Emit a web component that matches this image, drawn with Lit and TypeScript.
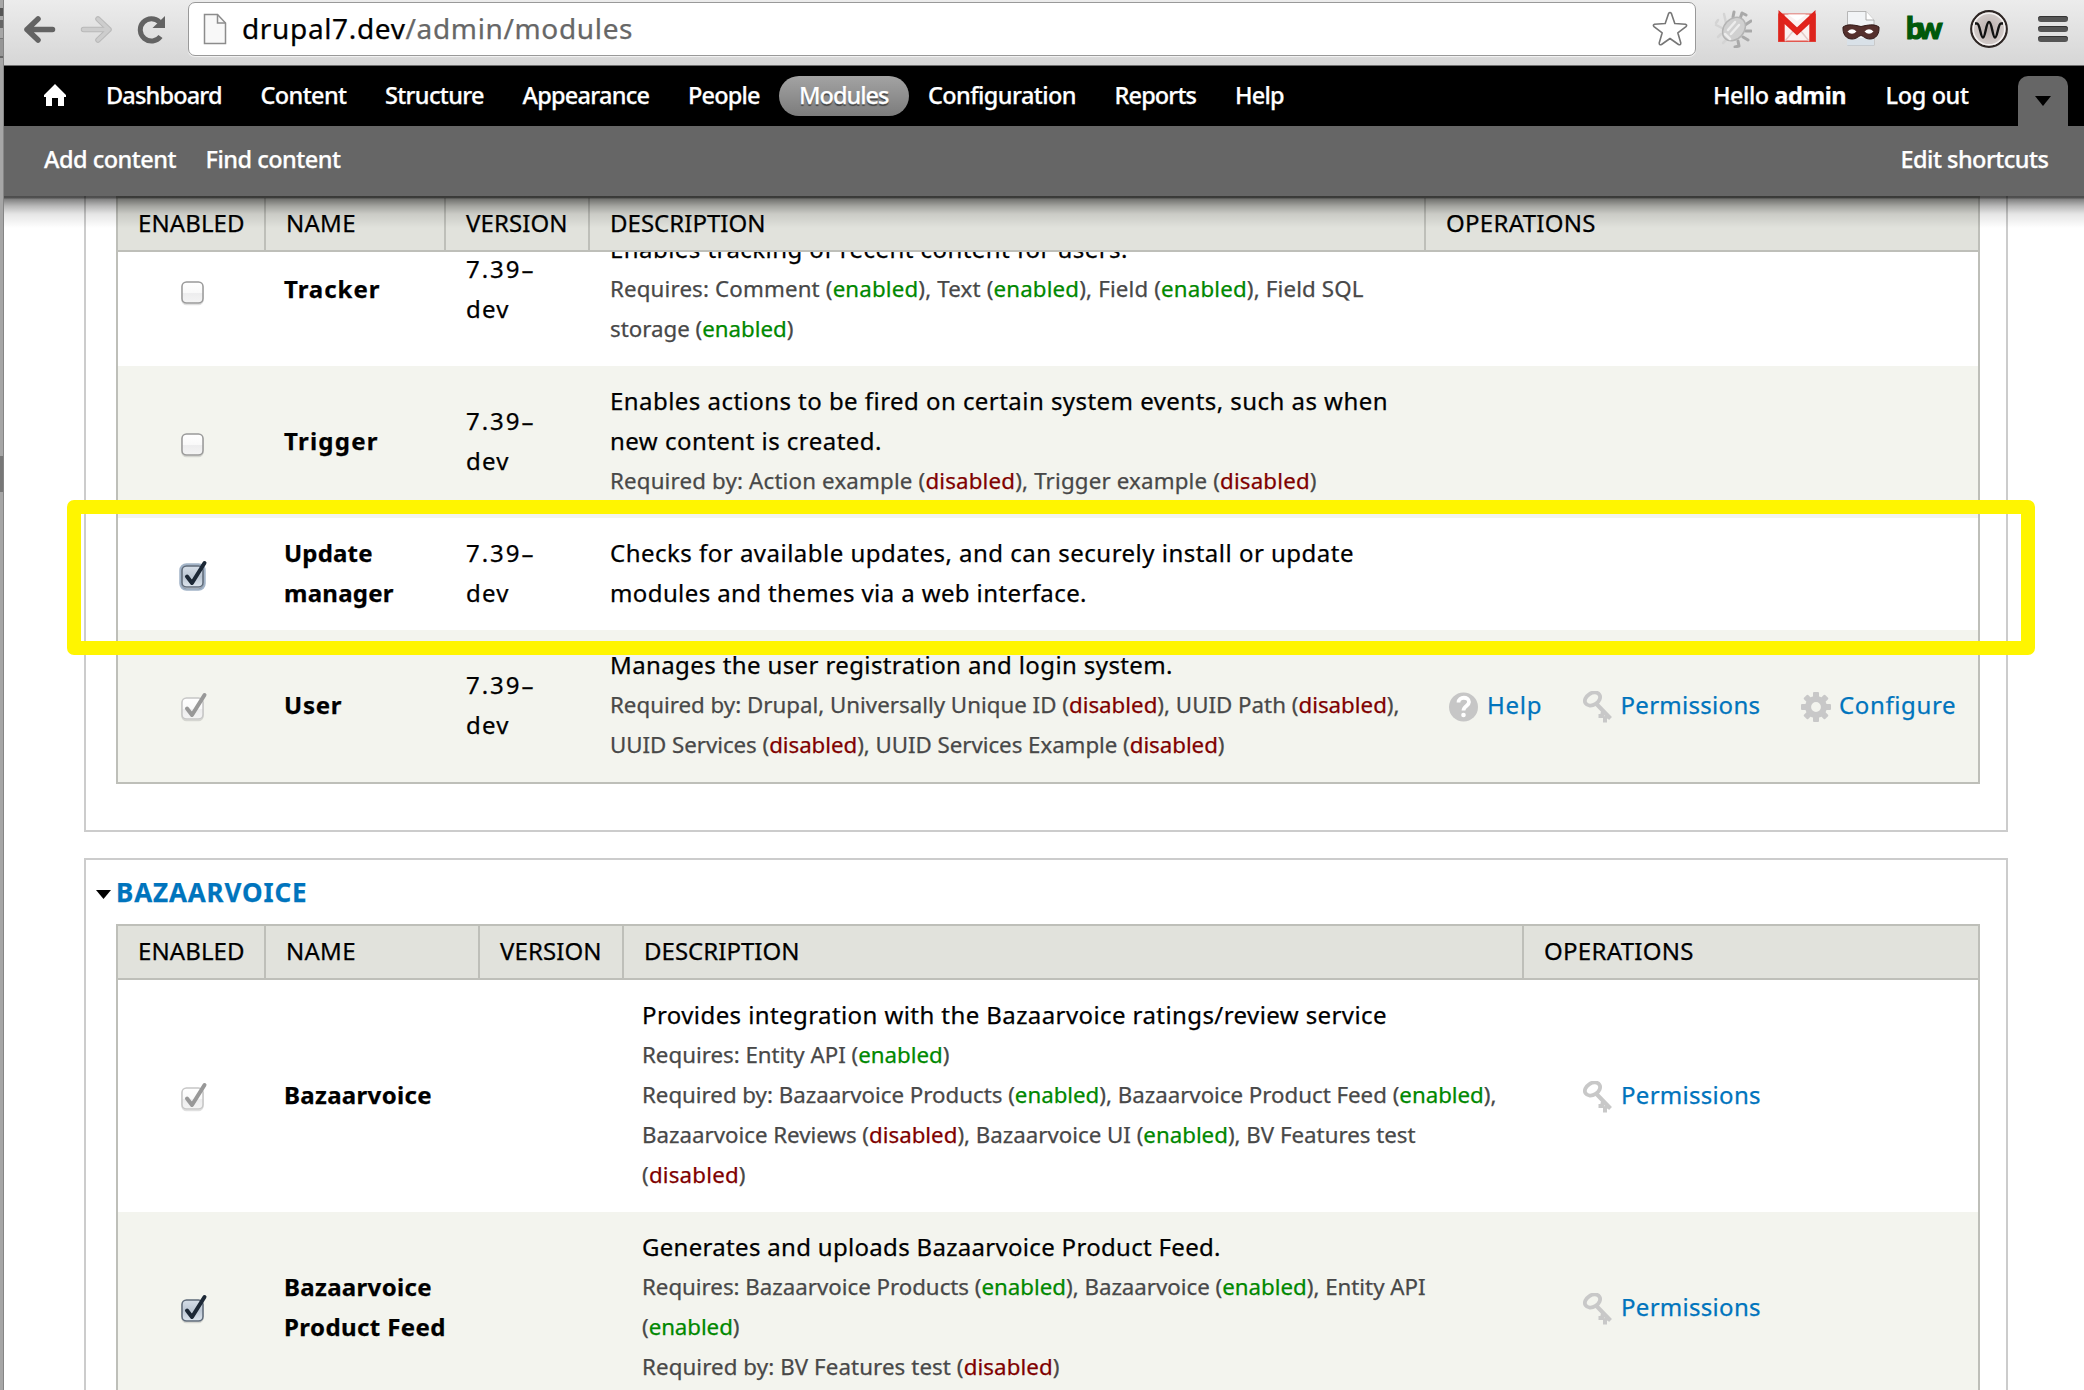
import { LitElement, html, css, svg, nothing, TemplateResult } from "lit";
import { customElement, property } from "lit/decorators.js";

/* A single line of text whose tracking is adjusted so that it fills a set width. */
@customElement("text-run")
class TextRun extends LitElement {
  @property({ type: Number }) w = 0;
  static styles = css`
    :host { display: inline-block; white-space: nowrap; }
    .t { display: inline-block; }
  `;
  render() {
    return html`<span class="t"><slot></slot></span>`;
  }
  updated() {
    if (!this.w) return;
    this.style.letterSpacing = "0px";
    const n = (this.textContent || "").trim().length;
    const natural = this.renderRoot.querySelector(".t")!.getBoundingClientRect().width;
    const pad = 2.5;
    const spacing = (this.w + pad - natural) / Math.max(1, n - 1);
    this.style.letterSpacing = spacing.toFixed(3) + "px";
    this.style.marginRight = (-spacing).toFixed(3) + "px";
  }
}

type Check = "off" | "on" | "focus" | "locked";
type Line = { t: string; w: number; small?: boolean };
type Row = { check: Check; name: [string, number][]; version?: boolean; lines: Line[]; ops: string[] };

const coreRows: Row[] = [
  {
    check: "off", name: [["Tracker", 93]], version: true, ops: [],
    lines: [
      { t: "Enables tracking of recent content for users.", w: 515 },
      { t: "Requires: Comment (enabled), Text (enabled), Field (enabled), Field SQL", w: 751, small: true },
      { t: "storage (enabled)", w: 181, small: true },
    ],
  },
  {
    check: "off", name: [["Trigger", 91]], version: true, ops: [],
    lines: [
      { t: "Enables actions to be fired on certain system events, such as when", w: 775 },
      { t: "new content is created.", w: 269 },
      { t: "Required by: Action example (disabled), Trigger example (disabled)", w: 704, small: true },
    ],
  },
  {
    check: "focus", name: [["Update", 86], ["manager", 107]], version: true, ops: [],
    lines: [
      { t: "Checks for available updates, and can securely install or update", w: 741 },
      { t: "modules and themes via a web interface.", w: 474 },
    ],
  },
  {
    check: "locked", name: [["User", 55]], version: true, ops: ["Help", "Permissions", "Configure"],
    lines: [
      { t: "Manages the user registration and login system.", w: 560 },
      { t: "Required by: Drupal, Universally Unique ID (disabled), UUID Path (disabled),", w: 787, small: true },
      { t: "UUID Services (disabled), UUID Services Example (disabled)", w: 612, small: true },
    ],
  },
];

const bvRows: Row[] = [
  {
    check: "locked", name: [["Bazaarvoice", 145]], ops: ["Permissions"],
    lines: [
      { t: "Provides integration with the Bazaarvoice ratings/review service", w: 742 },
      { t: "Requires: Entity API (enabled)", w: 305, small: true },
      { t: "Required by: Bazaarvoice Products (enabled), Bazaarvoice Product Feed (enabled),", w: 852, small: true },
      { t: "Bazaarvoice Reviews (disabled), Bazaarvoice UI (enabled), BV Features test", w: 771, small: true },
      { t: "(disabled)", w: 101, small: true },
    ],
  },
  {
    check: "on", name: [["Bazaarvoice", 145], ["Product Feed", 159]], ops: ["Permissions"],
    lines: [
      { t: "Generates and uploads Bazaarvoice Product Feed.", w: 576 },
      { t: "Requires: Bazaarvoice Products (enabled), Bazaarvoice (enabled), Entity API", w: 781, small: true },
      { t: "(enabled)", w: 95, small: true },
      { t: "Required by: BV Features test (disabled)", w: 415, small: true },
    ],
  },
];

const headings: [string, number][] = [
  ["ENABLED", 104], ["NAME", 67], ["VERSION", 99], ["DESCRIPTION", 153], ["OPERATIONS", 147],
];

const opWidths: Record<string, number> = { Help: 52, Permissions: 137, Configure: 114 };

const gearTeeth = [0, 45, 90, 135, 180, 225, 270, 315];

const opIcons: Record<string, TemplateResult> = {
  Help: html`<svg class="opicon" viewBox="0 0 32 32">
    <circle cx="15.500" cy="16" r="14.500" fill="#c6c6c6"/>
    <path d="M10.500 11.500c0-6.500 10.500-6 10.500-.5 0 4-5.500 4-5.500 8.500" fill="none" stroke="#fff" stroke-width="3.800"/>
    <circle cx="15.500" cy="24" r="2.300" fill="#fff"/></svg>`,
  Permissions: html`<svg class="opicon" viewBox="0 0 32 32">
    <g fill="none" stroke="#c8c8c8" stroke-linejoin="round"><ellipse cx="10.500" cy="8" rx="8.200" ry="5.800" stroke-width="3.800" transform="rotate(-32 10.500 8)"/>
    <path d="M14.500 13L28.500 27.500M21 20.500l-1 4.500h-3.500M25 25l-2 2.500v4" stroke-width="4"/></g></svg>`,
  Configure: html`<svg class="opicon" viewBox="0 0 32 32">
    ${gearTeeth.map((a) => svg`<rect x="13" y="1" width="6" height="8" rx="1" fill="#c8c8c8" transform=${`rotate(${a} 16 16)`}/>`)}
    <circle cx="16" cy="16" r="7.900" fill="none" stroke="#c8c8c8" stroke-width="6"/></svg>`,
};

@customElement("module-table")
class ModuleTable extends LitElement {
  @property({ attribute: false }) rows: Row[] = [];
  @property({ type: Boolean, reflect: true }) scrolled = false;

  static styles = css`
    :host { display: block; width: 1860px; border: 2px solid #bebfb9; }
    .head, .row { display: grid; grid-template-columns: 148px 180px 144px 836px 1fr; }
    :host(:not([scrolled])) .head, :host(:not([scrolled])) .row { grid-template-columns: 148px 214px 144px 900px 1fr; }
    .head { height: 52px; background: #e1e2dc; border-bottom: 2px solid #bebfb9; position: relative; z-index: 1; }
    .th { border-right: 2px solid #bebfb9; padding: 5px 0 0 20px; line-height: 40px; }
    .th:last-child { border-right: 0; }
    .row { background: #fff; padding: 15px 0 17px; align-items: center; line-height: 40px; }
    .row:nth-child(even) { background: #f3f4ee; }
    .body { display: flex; flex-direction: column; }
    :host([scrolled]) .body { margin-top: -38px; }
    .check { padding-left: 62px; height: 24px; margin-top: 5px; }
    .check svg { display: block; overflow: visible; }
    .name { font-weight: bold; padding-left: 18px; display: flex; flex-direction: column; }
    .version { padding-left: 20px; display: flex; flex-direction: column; }
    .desc { padding-left: 18px; display: flex; flex-direction: column; }
    :host([scrolled]) .desc { padding-left: 20px; }
    .line { height: 40px; }
    .small { font-size: 22.300px; color: #484848; }
    .enabled { color: #080; }
    .disabled { color: #800000; }
    .ops { display: flex; }
    .op { display: flex; align-items: center; color: #0074bd; }
    .ops .op { padding-left: 22px; padding-right: 18px; }
    .ops.single .op { padding-left: 58px; }
    .opicon { width: 32px; height: 32px; margin: 3px 7px 0 0; flex: none; }
  `;

  colored(t: string) {
    return t.split(/(enabled|disabled)/).map((p) =>
      p === "enabled" || p === "disabled" ? html`<span class=${p}>${p}</span>` : p);
  }

  checkbox(c: Check) {
    const locked = c === "locked";
    const marked = c !== "off";
    const blue = c === "on" || c === "focus";
    return html`<svg width="24" height="24" viewBox="0 0 24 24">
      <defs>
        <linearGradient id="w" x1="0" y1="0" x2="0" y2="1"><stop offset="0" stop-color="#fff"/><stop offset=".5" stop-color="#f9f9f9"/><stop offset=".55" stop-color="#ededee"/><stop offset="1" stop-color="#f4f4f4"/></linearGradient>
        <linearGradient id="b" x1="0" y1="0" x2="0" y2="1"><stop offset="0" stop-color="#d6dee8"/><stop offset=".5" stop-color="#bcc7d4"/><stop offset="1" stop-color="#dde5ee"/></linearGradient>
      </defs>
      ${c === "focus" ? svg`<rect x="0.500" y="0.500" width="24" height="25" rx="6" fill="none" stroke="#a3b4c8" stroke-width="2.500"/>` : nothing}
      <rect x="2" y="3" width="21" height="21.500" rx="4.500" fill="none" stroke="#000" stroke-opacity=".12" stroke-width="1.500"/>
      <rect x="2" y="2" width="21" height="21" rx="4.500" fill=${blue ? "url(#b)" : "url(#w)"} stroke=${locked ? "#c6c6c6" : blue ? "#5d6978" : "#999"} stroke-width="1.500"/>
      ${marked ? svg`<path d="M7 12.500L12 19L24.500 -1" fill="none" stroke=${locked ? "#989898" : "#1c2836"} stroke-width="4" stroke-linecap="round" stroke-linejoin="round"/>` : nothing}
    </svg>`;
  }

  render() {
    return html`
      <div class="head">${headings.map(([t, w]) => html`<div class="th"><text-run w=${w}>${t}</text-run></div>`)}</div>
      <div class="body">
        ${this.rows.map((r) => html`<div class="row">
          <div class="check">${this.checkbox(r.check)}</div>
          <div class="name">${r.name.map(([t, w]) => html`<div class="line"><text-run w=${w}>${t}</text-run></div>`)}</div>
          <div class="version">${r.version ? html`<div class="line"><text-run w="65">7.39–</text-run></div><div class="line"><text-run w="40">dev</text-run></div>` : nothing}</div>
          <div class="desc">${r.lines.map((l) => html`<div class="line ${l.small ? "small" : ""}"><text-run w=${l.w}>${this.colored(l.t)}</text-run></div>`)}</div>
          <div class="ops ${r.ops.length === 1 ? "single" : ""}">${r.ops.map((o) => html`<div class="op">${opIcons[o]}<text-run w=${opWidths[o]}>${o}</text-run></div>`)}</div>
        </div>`)}
      </div>`;
  }
}

const nav: [string, number][] = [
  ["Dashboard", 114], ["Content", 84], ["Structure", 97], ["Appearance", 125], ["People", 70],
  ["Modules", 88], ["Configuration", 146], ["Reports", 80], ["Help", 47],
];

const bug = html`<svg width="38" height="38" viewBox="0 0 38 38">
  <g fill="none" stroke="#a9a9a9" stroke-width="3" stroke-linecap="round" stroke-linejoin="round">
    <path d="M19 7L20 2M26 9L28 3L32 5M31 15L37 11M32 21H37M29 27L34 30M24 31L25 36L21 37"/></g>
  <g fill="none" stroke="#d4d4d4" stroke-width="2.500" stroke-linecap="round"><path d="M12 13L10 4M8 18L2 15M7 24L4 27M12 30L9 33M4 10L2 13"/></g>
  <ellipse cx="20" cy="19" rx="10" ry="13" transform="rotate(42 20 19)" fill="#d0d0d0" stroke="#b4b4b4" stroke-width="1.500"/>
  <path d="M14 20L21 12M17 24L25 15M11 24L16 29" stroke="#ececec" stroke-width="2.500" stroke-linecap="round"/></svg>`;

const mail = html`<svg width="38" height="38" viewBox="0 0 38 38">
  <rect x="0" y="3.500" width="38" height="28.500" fill="#e2574f"/>
  <rect x="6.500" y="4.500" width="25" height="26" fill="#fbf1f0"/>
  <path d="M7 31L16 20M31 31L22 20" stroke="#e3c9c7" stroke-width="1.500"/>
  <path d="M10 4.500H28L19 11Z" fill="#fff"/>
  <path d="M3.500 31.500V7L19 21.500L34.500 7V31.500" fill="none" stroke="#dd241d" stroke-width="6"/>
  <path d="M2 6L19 22L36 6" fill="none" stroke="#e8221b" stroke-width="2"/></svg>`;

const mask = html`<svg width="38" height="38" viewBox="0 0 38 38">
  <path d="M5.500 1.500H24L32 10V35.500H5.500Z" fill="#f2f4f6" stroke="#b6b6b6" stroke-width="1"/>
  <path d="M5 28H32V35.500H5Z" fill="#d9e1e8"/>
  <path d="M24 1.500V10H32" fill="#fff" stroke="#aaa" stroke-width="1"/>
  <path d="M1 17C6 13.500 12 15 19 16.500C26 15 32 13.500 37 17C37.500 24 34 29 28 29C23 29 21.500 26 19 25.500C16.500 26 15 29 10 29C4 29 .5 24 1 17Z" fill="#55302d" stroke="#331a18" stroke-width="1"/>
  <path d="M5.500 21.500Q10 17 14.500 21.500Q10 26 5.500 21.500ZM22.500 21.500Q27 17 31.500 21.500Q27 26 22.500 21.500Z" fill="#fff"/></svg>`;

const wave = html`<svg width="38" height="38" viewBox="0 0 38 38">
  <defs><radialGradient id="m"><stop offset="0" stop-color="#b9adab"/><stop offset="1" stop-color="#d6cfcd"/></radialGradient></defs>
  <circle cx="19" cy="19" r="17.800" fill="url(#m)" stroke="#2e2624" stroke-width="2.200"/>
  <circle cx="19" cy="19" r="15.800" fill="none" stroke="#f5f2f1" stroke-width="1.500"/>
  <path d="M5 13.500H7C10 13.500 10.500 27.500 13 27.500C15.500 27.500 16 12 19 12C22 12 22.500 27.500 25 27.500C27.500 27.500 28 13.500 31 13.500H33" fill="none" stroke="#111" stroke-width="2.400"/></svg>`;

@customElement("app-root")
class AppRoot extends LitElement {
  static styles = css`
    :host { display: block; font-family: "Noto Sans", "Open Sans", sans-serif; font-size: 24px; color: #000; -webkit-text-stroke: .25px; }
    .screen { position: relative; width: 2084px; height: 1390px; overflow: hidden; background: #fff; display: flex; }
    .edge { width: 4px; flex: none; box-sizing: border-box; border-right: 1px solid #858585; background: linear-gradient(#a6a6a6 8px, #555 8px 16px, #a6a6a6 16px 20px, #666 20px 28px, #a6a6a6 28px 38px, #777 38px 39px, #959595 39px 56px, #666 56px 58px, #a6a6a6 58px 456px, #777 456px 492px, #a6a6a6 492px); }
    .window { flex: 1; display: flex; flex-direction: column; min-width: 0; }
    .chrome { height: 66px; flex: none; border-bottom: 1px solid #6e6e6e; background: linear-gradient(#ececec, #d6d6d6); display: flex; box-sizing: border-box; }
    .chrome svg { display: block; flex: none; }
    .buttons { width: 184px; padding: 14px 0 0 18px; box-sizing: border-box; display: flex; gap: 15px; }
    .omnibox { margin-top: 2px; width: 1508px; height: 54px; box-sizing: border-box; border: 1.500px solid #999; border-radius: 7px; background: #fff; box-shadow: 0 1px 1px #f4f4f4; display: flex; align-items: center; padding: 0 7px 0 14px; }
    .url { flex: 1; padding-left: 15px; font-size: 28px; line-height: 49px; height: 50px; color: #676767; }
    .url b { font-weight: normal; color: #000; }
    .exts { display: flex; padding-top: 10px; padding-left: 18px; gap: 26px; }
    .bw { width: 38px; height: 38px; color: #00590a; font: 900 31px/34px Lato, "Noto Sans", sans-serif; -webkit-text-stroke: 1.200px #00590a; display: flex; }
    .burger { width: 30px; margin: 6px 0 0 4px; display: flex; flex-direction: column; gap: 4px; }
    .bar { height: 6px; border-radius: 3px; background: #555; box-shadow: inset 0 1px 0 #333; }
    .menu { background: #000; height: 60px; flex: none; display: flex; color: #fff; font-size: 23.500px; font-weight: 500; line-height: 59px; position: relative; }
    .home { width: 22px; height: 22px; margin: 18px 21px 0 40px; }
    .items { display: flex; flex: 1; gap: 0; }
    .item { padding: 0 19px; height: 58px; }
    .item.active { margin: 10px 0 0; padding: 0 19.500px; height: 40px; line-height: 39px; border-radius: 20px; background: linear-gradient(#a3a3a3, #7c7c7c); text-shadow: 0 2px 1px #444; }
    .user { display: flex; gap: 39px; padding-right: 49px; }
    .user b { font-weight: bold; }
    .tab { width: 50px; height: 50px; margin: 10px 16px 0 0; border-radius: 10px 10px 0 0; background: #666; display: flex; justify-content: center; align-items: center; }
    .shortcuts { height: 70px; flex: none; background: #666; color: #fff; display: flex; gap: 29px; padding: 0 35px 0 40px; box-sizing: border-box; font-size: 23.500px; font-weight: 500; line-height: 66px; position: relative; z-index: 3; }
    .shortcuts::after { content: ""; position: absolute; left: 0; right: 0; top: 70px; height: 32px; background: linear-gradient(rgba(0,0,0,.7), rgba(0,0,0,.68) 2px, rgba(0,0,0,.5) 3px, rgba(0,0,0,.28) 10px, rgba(0,0,0,.1) 18px, rgba(0,0,0,0)); }
    .spacer { flex: 1; }
    .page { flex: 1; min-height: 0; padding: 0 76px 0 80px; display: flex; flex-direction: column; gap: 26px; }
    .group { border: 2px solid #ccc; padding: 0 26px 0 30px; flex: none; }
    .group.first { border-top: 0; padding-bottom: 46px; }
    .group.second { height: 600px; }
    .title { height: 64px; margin-left: -20px; display: flex; align-items: center; gap: 5px; font-weight: bold; font-size: 26px; color: #0074bd; line-height: 60px; }
    .title svg { margin-top: 4px; }
    .highlight { position: absolute; left: 67px; top: 500px; width: 1940px; height: 127px; border: 14px solid #fff500; border-radius: 7px; }
  `;

  render() {
    return html`<div class="screen">
      <div class="edge"></div>
      <div class="window">
        <div class="chrome">
          <div class="buttons">
            <svg width="40" height="30" viewBox="0 0 40 30"><path d="M16 5L5 15.500L16 26M5 15.500H30.500" fill="none" stroke="#636363" stroke-width="5.500" stroke-linecap="round" stroke-linejoin="round"/></svg>
            <svg width="40" height="30" viewBox="0 0 40 30"><path d="M21 5L32 15.500L21 26M32 15.500H6.500" fill="none" stroke="#b9b9b9" stroke-width="5.500" stroke-linecap="round" stroke-linejoin="round"/><path d="M21 5L32 15.500L21 26M32 15.500H6.500" fill="none" stroke="#cdcdcd" stroke-width="3.500" stroke-linecap="round" stroke-linejoin="round"/></svg>
            <svg width="36" height="30" viewBox="0 0 36 30"><path d="M28.500 22.500A11.200 11.200 0 1 1 27.500 8" fill="none" stroke="#636363" stroke-width="5"/><path d="M33 2V14H20.500Z" fill="#636363"/></svg>
          </div>
          <div class="omnibox">
            <svg width="24" height="32" viewBox="0 0 24 32"><path d="M1.500 1.500H14.500L22.500 10V30.500H1.500Z" fill="#f8f8f8" stroke="#8c8c8c" stroke-width="1.500"/><path d="M14.500 1.500V10H22.500" fill="none" stroke="#8c8c8c" stroke-width="1.500"/></svg>
            <div class="url"><text-run w="388"><b>drupal7.dev</b>/admin/modules</text-run></div>
            <svg width="36" height="36" viewBox="0 0 36 36"><path d="M16.600 2.500Q18 .5 19.400 2.500L22.800 12.500L33.500 13.200Q35.500 14 34 15.600L25.800 21.800L28.800 32Q28.700 34.500 26.500 33.500L18 27.500L9.500 33.500Q7.300 34.500 7.200 32L10.200 21.800L2 15.600Q.5 14 2.500 13.200L13.200 12.500Z" fill="#fff" stroke="#777" stroke-width="1.600" stroke-linejoin="round"/></svg>
          </div>
          <div class="exts">${bug}${mail}${mask}<div class="bw"><text-run w="34">bw</text-run></div>${wave}
            <div class="burger"><div class="bar"></div><div class="bar"></div><div class="bar"></div></div></div>
        </div>
        <div class="menu">
          <svg class="home" viewBox="0 0 22 22"><path d="M11 0L22 11V13H20V22H14V14H8V22H2V13H0V11Z" fill="#fff"/></svg>
          <div class="items">${nav.map(([t, w]) => html`<div class="item ${t === "Modules" ? "active" : ""}"><text-run w=${w}>${t}</text-run></div>`)}</div>
          <div class="user"><text-run w="131">Hello <b>admin</b></text-run><text-run w="81">Log out</text-run></div>
          <div class="tab"><svg width="16" height="10" viewBox="0 0 16 10"><path d="M0 0H16L8 10Z"/></svg></div>
        </div>
        <div class="shortcuts">
          <text-run w="130">Add content</text-run><text-run w="133">Find content</text-run>
          <div class="spacer"></div>
          <text-run w="146">Edit shortcuts</text-run>
        </div>
        <div class="page">
          <div class="group first"><module-table scrolled .rows=${coreRows}></module-table></div>
          <div class="group second">
            <div class="title"><svg width="15" height="9" viewBox="0 0 15 9"><path d="M0 0H15L7.500 9Z"/></svg><text-run w="188">BAZAARVOICE</text-run></div>
            <module-table .rows=${bvRows}></module-table>
          </div>
        </div>
      </div>
      <div class="highlight"></div>
    </div>`;
  }
}
